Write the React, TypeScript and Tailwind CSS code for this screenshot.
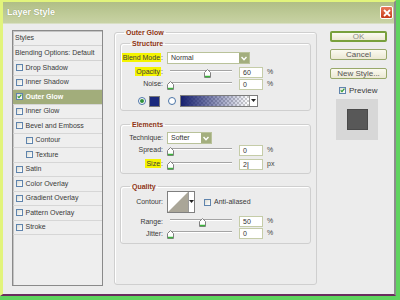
import type { ReactNode } from 'react';

const styleRows = [
  { name: 'Drop Shadow' },
  { name: 'Inner Shadow' },
  { name: 'Outer Glow', on: true },
  { name: 'Inner Glow' },
  { name: 'Bevel and Emboss' },
  { name: 'Contour', sub: true },
  { name: 'Texture', sub: true },
  { name: 'Satin' },
  { name: 'Color Overlay' },
  { name: 'Gradient Overlay' },
  { name: 'Pattern Overlay' },
  { name: 'Stroke' },
];

function Check({ on }: { on?: boolean }) {
  return (
    <span className="w-[7px] h-[7px] shrink-0 border border-[#5f84ad] bg-[linear-gradient(135deg,#dcdcd4,#ffffff)] flex items-center justify-center">
      {on && (
        <svg width="7" height="7" viewBox="0 0 7 7">
          <path d="M1 3.2 L2.8 5.2 L6.2 0.8" fill="none" stroke="#2f9a2f" strokeWidth="1.6" />
        </svg>
      )}
    </span>
  );
}

function Thumb({ pos }: { pos: number }) {
  return (
    <svg width="7" height="9" viewBox="0 0 7 9" className="absolute top-[-1px]" style={{ left: `${pos * 62}px` }}>
      <path d="M0.5 8.5 V3.5 L3.5 0.5 L6.5 3.5 V8.5 Z" fill="#ffffff" stroke="#808080" />
      <path d="M1 7.5 H6" stroke="#3cb43c" strokeWidth="1.5" />
    </svg>
  );
}

function Slider({ value }: { value: number }) {
  return (
    <div className="relative w-[68px] h-[10px] shrink-0">
      <div className="mx-[3px] mt-[5px] h-[2px] border-t border-[#a4a4a4] border-b border-b-white" />
      <Thumb pos={value} />
    </div>
  );
}

function Field({ children }: { children: ReactNode }) {
  return (
    <div className="ml-[4px] w-[24px] h-[11px] border border-[#c5cca8] bg-white text-[7px] leading-[9px] pl-[3px] text-[#333]">
      {children}
    </div>
  );
}

function Label({ children }: { children: ReactNode }) {
  return (
    <div className="w-[42px] shrink-0 flex justify-end whitespace-nowrap text-[7px] leading-[10px] text-[#3a3a3a]">
      <span>{children}</span>
    </div>
  );
}

function Mark({ children }: { children: ReactNode }) {
  return <span className="bg-[#f4f400] px-[1px] py-[1px]">{children}</span>;
}

function SliderRow({ label, value, text, unit, className }: { label: ReactNode; value: number; text: ReactNode; unit: string; className?: string }) {
  return (
    <div className={`flex items-center h-[12px] ${className ?? ''}`}>
      <Label>{label}</Label>
      <div className="ml-[4px]">
        <Slider value={value} />
      </div>
      <Field>{text}</Field>
      <span className="ml-[4px] text-[7px] text-[#444]">{unit}</span>
    </div>
  );
}

function Select({ value, width }: { value: string; width: string }) {
  return (
    <div className={`ml-[4px] h-[12px] flex border border-[#b9c29a] bg-white ${width}`}>
      <span className="flex-1 pl-[3px] text-[7px] leading-[10px] text-[#333]">{value}</span>
      <span className="w-[10px] bg-[#a3ae7e] flex items-center justify-center">
        <svg width="6" height="5" viewBox="0 0 6 5">
          <path d="M0.5 1 L3 3.8 L5.5 1" fill="none" stroke="#ffffff" strokeWidth="1.4" />
        </svg>
      </span>
    </div>
  );
}

function Group({ title, className, children }: { title: string; className?: string; children: ReactNode }) {
  return (
    <fieldset className={`border border-[#cfcfcf] rounded-[3px] shadow-[inset_1px_1px_0_#ffffff] ${className ?? ''}`}>
      <legend className="ml-[9px] px-[2px] text-[7px] leading-[9px] font-bold text-[#8e3412]">{title}</legend>
      {children}
    </fieldset>
  );
}

function Radio({ on }: { on?: boolean }) {
  return (
    <span className="w-[8px] h-[8px] rounded-full border border-[#4a73a6] bg-white flex items-center justify-center shrink-0">
      {on && <span className="w-[4px] h-[4px] rounded-full bg-[#2f8f3a]" />}
    </span>
  );
}

function Button({ children, primary, className }: { children: ReactNode; primary?: boolean; className?: string }) {
  return (
    <div
      className={`w-[57px] h-[11px] rounded-[2px] bg-[linear-gradient(#fbfaf0,#ebe8d3)] flex items-center justify-center text-[8px] leading-[9px] ${
        primary ? 'border-2 border-[#78a03c] text-[#8a8a8a]' : 'border border-[#98a86a] text-[#555]'
      } ${className ?? ''}`}
    >
      {children}
    </div>
  );
}

export default function App() {
  return (
    <div className="w-[400px] h-[300px] overflow-hidden bg-[#5fd35f] font-['Liberation_Sans',Arial,sans-serif]">
      <div className="w-[396px] h-[296px] flex flex-col border-l-[3px] border-t-[2px] border-[#e2f47c] border-r-[2px] border-r-[#8c8c8c] border-b-[2px] border-b-[#6a2c5e]">
        {/* title bar */}
        <div className="h-[22px] flex items-center justify-between pl-[4px] pr-[1px] bg-[linear-gradient(to_bottom,#b0be86,#bfcb98_60%,#c8d2a4)] border-b border-[#d9e0c4]">
          <span className="text-[9px] font-bold text-white [text-shadow:0_0_1px_#7d8a5a]">Layer Style</span>
          <span className="w-[13px] h-[13px] rounded-[2px] border border-white bg-[linear-gradient(#ea7a5a,#c63a1a)] flex items-center justify-center">
            <svg width="8" height="8" viewBox="0 0 8 8">
              <path d="M1 1 L7 7 M7 1 L1 7" stroke="#ffffff" strokeWidth="1.8" />
            </svg>
          </span>
        </div>

        <div className="flex-1 flex items-start pl-[9px] bg-[#ececec]">
          {/* styles list */}
          <div className="mt-[6px] w-[91px] h-[256px] border border-[#8a8a8a] shadow-[inset_1px_1px_0_#c4c4c4] bg-[#eeeeee] text-[7px] text-[#3a3a3a]">
            <div className="h-[15px] flex items-center pl-[2px] border-b border-[#d2d2d2]">Styles</div>
            <div className="h-[15px] flex items-center pl-[2px] border-b border-[#d2d2d2]">Blending Options: Default</div>
            {styleRows.map((row) => (
              <div
                key={row.name}
                className={`h-[14.5px] flex items-center gap-[2.5px] border-b border-[#d6d6d6] ${row.sub ? 'pl-[13px]' : 'pl-[3px]'} ${
                  row.on ? 'bg-[#a2ad7b] text-white font-bold' : ''
                }`}
              >
                <Check on={row.on} />
                <span>{row.name}</span>
              </div>
            ))}
          </div>

          {/* outer glow settings */}
          <Group title="Outer Glow" className="ml-[11px] mt-[4px] w-[203px] h-[257px]">
            <div className="mx-[5px] pt-[2px]">
              <Group title="Structure" className="pb-[3px]">
                <div className="flex items-center h-[12px] mt-[4px]">
                  <Label>
                    <Mark>Blend Mode</Mark>:
                  </Label>
                  <Select value="Normal" width="w-[83px]" />
                </div>
                <SliderRow
                  className="mt-[2px]"
                  label={
                    <>
                      <Mark>Opacity</Mark>:
                    </>
                  }
                  value={0.6}
                  text="60"
                  unit="%"
                />
                <SliderRow label="Noise:" value={0} text="0" unit="%" />
                <div className="flex items-center h-[12px] mt-[5px] pl-[17px]">
                  <Radio on />
                  <span className="ml-[3px] w-[11px] h-[11px] border border-[#7a7a7a] bg-[#1b2a7e]" />
                  <span className="ml-[8px]">
                    <Radio />
                  </span>
                  <div className="ml-[4px] w-[78px] h-[12px] flex border border-[#7c7c7c] bg-white">
                    <div className="flex-1 bg-[linear-gradient(to_right,#16206e,rgba(22,32,110,0)),repeating-conic-gradient(#cfcfcf_0_25%,#ffffff_0_50%)] bg-[length:100%_100%,4px_4px]" />
                    <span className="w-[8px] border-l border-[#9a9a9a] flex items-center justify-center">
                      <svg width="5" height="4" viewBox="0 0 5 4">
                        <path d="M0 0 H5 L2.5 3 Z" fill="#222" />
                      </svg>
                    </span>
                  </div>
                </div>
              </Group>

              <Group title="Elements" className="mt-[9px] pb-[3px]">
                <div className="flex items-center h-[12px] mt-[3px]">
                  <Label>Technique:</Label>
                  <Select value="Softer" width="w-[45px]" />
                </div>
                <SliderRow label="Spread:" value={0} text="0" unit="%" />
                <SliderRow
                  className="mt-[2px]"
                  label={
                    <>
                      <Mark>Size</Mark>:
                    </>
                  }
                  value={0}
                  text={
                    <>
                      2<span className="text-[#000]">|</span>
                    </>
                  }
                  unit="px"
                />
              </Group>

              <Group title="Quality" className="mt-[8px] pb-[3px]">
                <div className="flex items-center h-[22px]">
                  <Label>Contour:</Label>
                  <div className="ml-[4px] flex h-[22px] border border-[#7f7f7f] bg-white">
                    <svg width="20" height="20" viewBox="0 0 20 20">
                      <polygon points="0,20 20,0 20,20" fill="#aaa698" />
                    </svg>
                    <span className="w-[6px] border-l border-[#9a9a9a] flex items-center justify-center">
                      <svg width="5" height="4" viewBox="0 0 5 4">
                        <path d="M0 0 H5 L2.5 3 Z" fill="#222" />
                      </svg>
                    </span>
                  </div>
                  <span className="ml-[9px]">
                    <Check />
                  </span>
                  <span className="ml-[3px] text-[7px] text-[#3a3a3a]">Anti-aliased</span>
                </div>
                <SliderRow className="mt-[2.5px]" label="Range:" value={0.52} text="50" unit="%" />
                <SliderRow label="Jitter:" value={0} text="0" unit="%" />
              </Group>
            </div>
          </Group>

          {/* buttons */}
          <div className="ml-[13px] mt-[7px] w-[57px] flex flex-col">
            <Button primary>OK</Button>
            <Button className="mt-[7px]">Cancel</Button>
            <Button className="mt-[8px]">New Style...</Button>
            <div className="mt-[7px] pl-[9px] flex items-center gap-[3px] text-[8px] leading-[9px] text-[#3a3a3a]">
              <Check on />
              <span>Preview</span>
            </div>
            <div className="mt-[4px] ml-[6px] w-[42px] h-[41px] bg-[#d7d7d7] flex items-center justify-center">
              <span className="w-[21px] h-[21px] bg-[#585858] border border-[#4a4a4a]" />
            </div>
          </div>
        </div>
      </div>
    </div>
  );
}
